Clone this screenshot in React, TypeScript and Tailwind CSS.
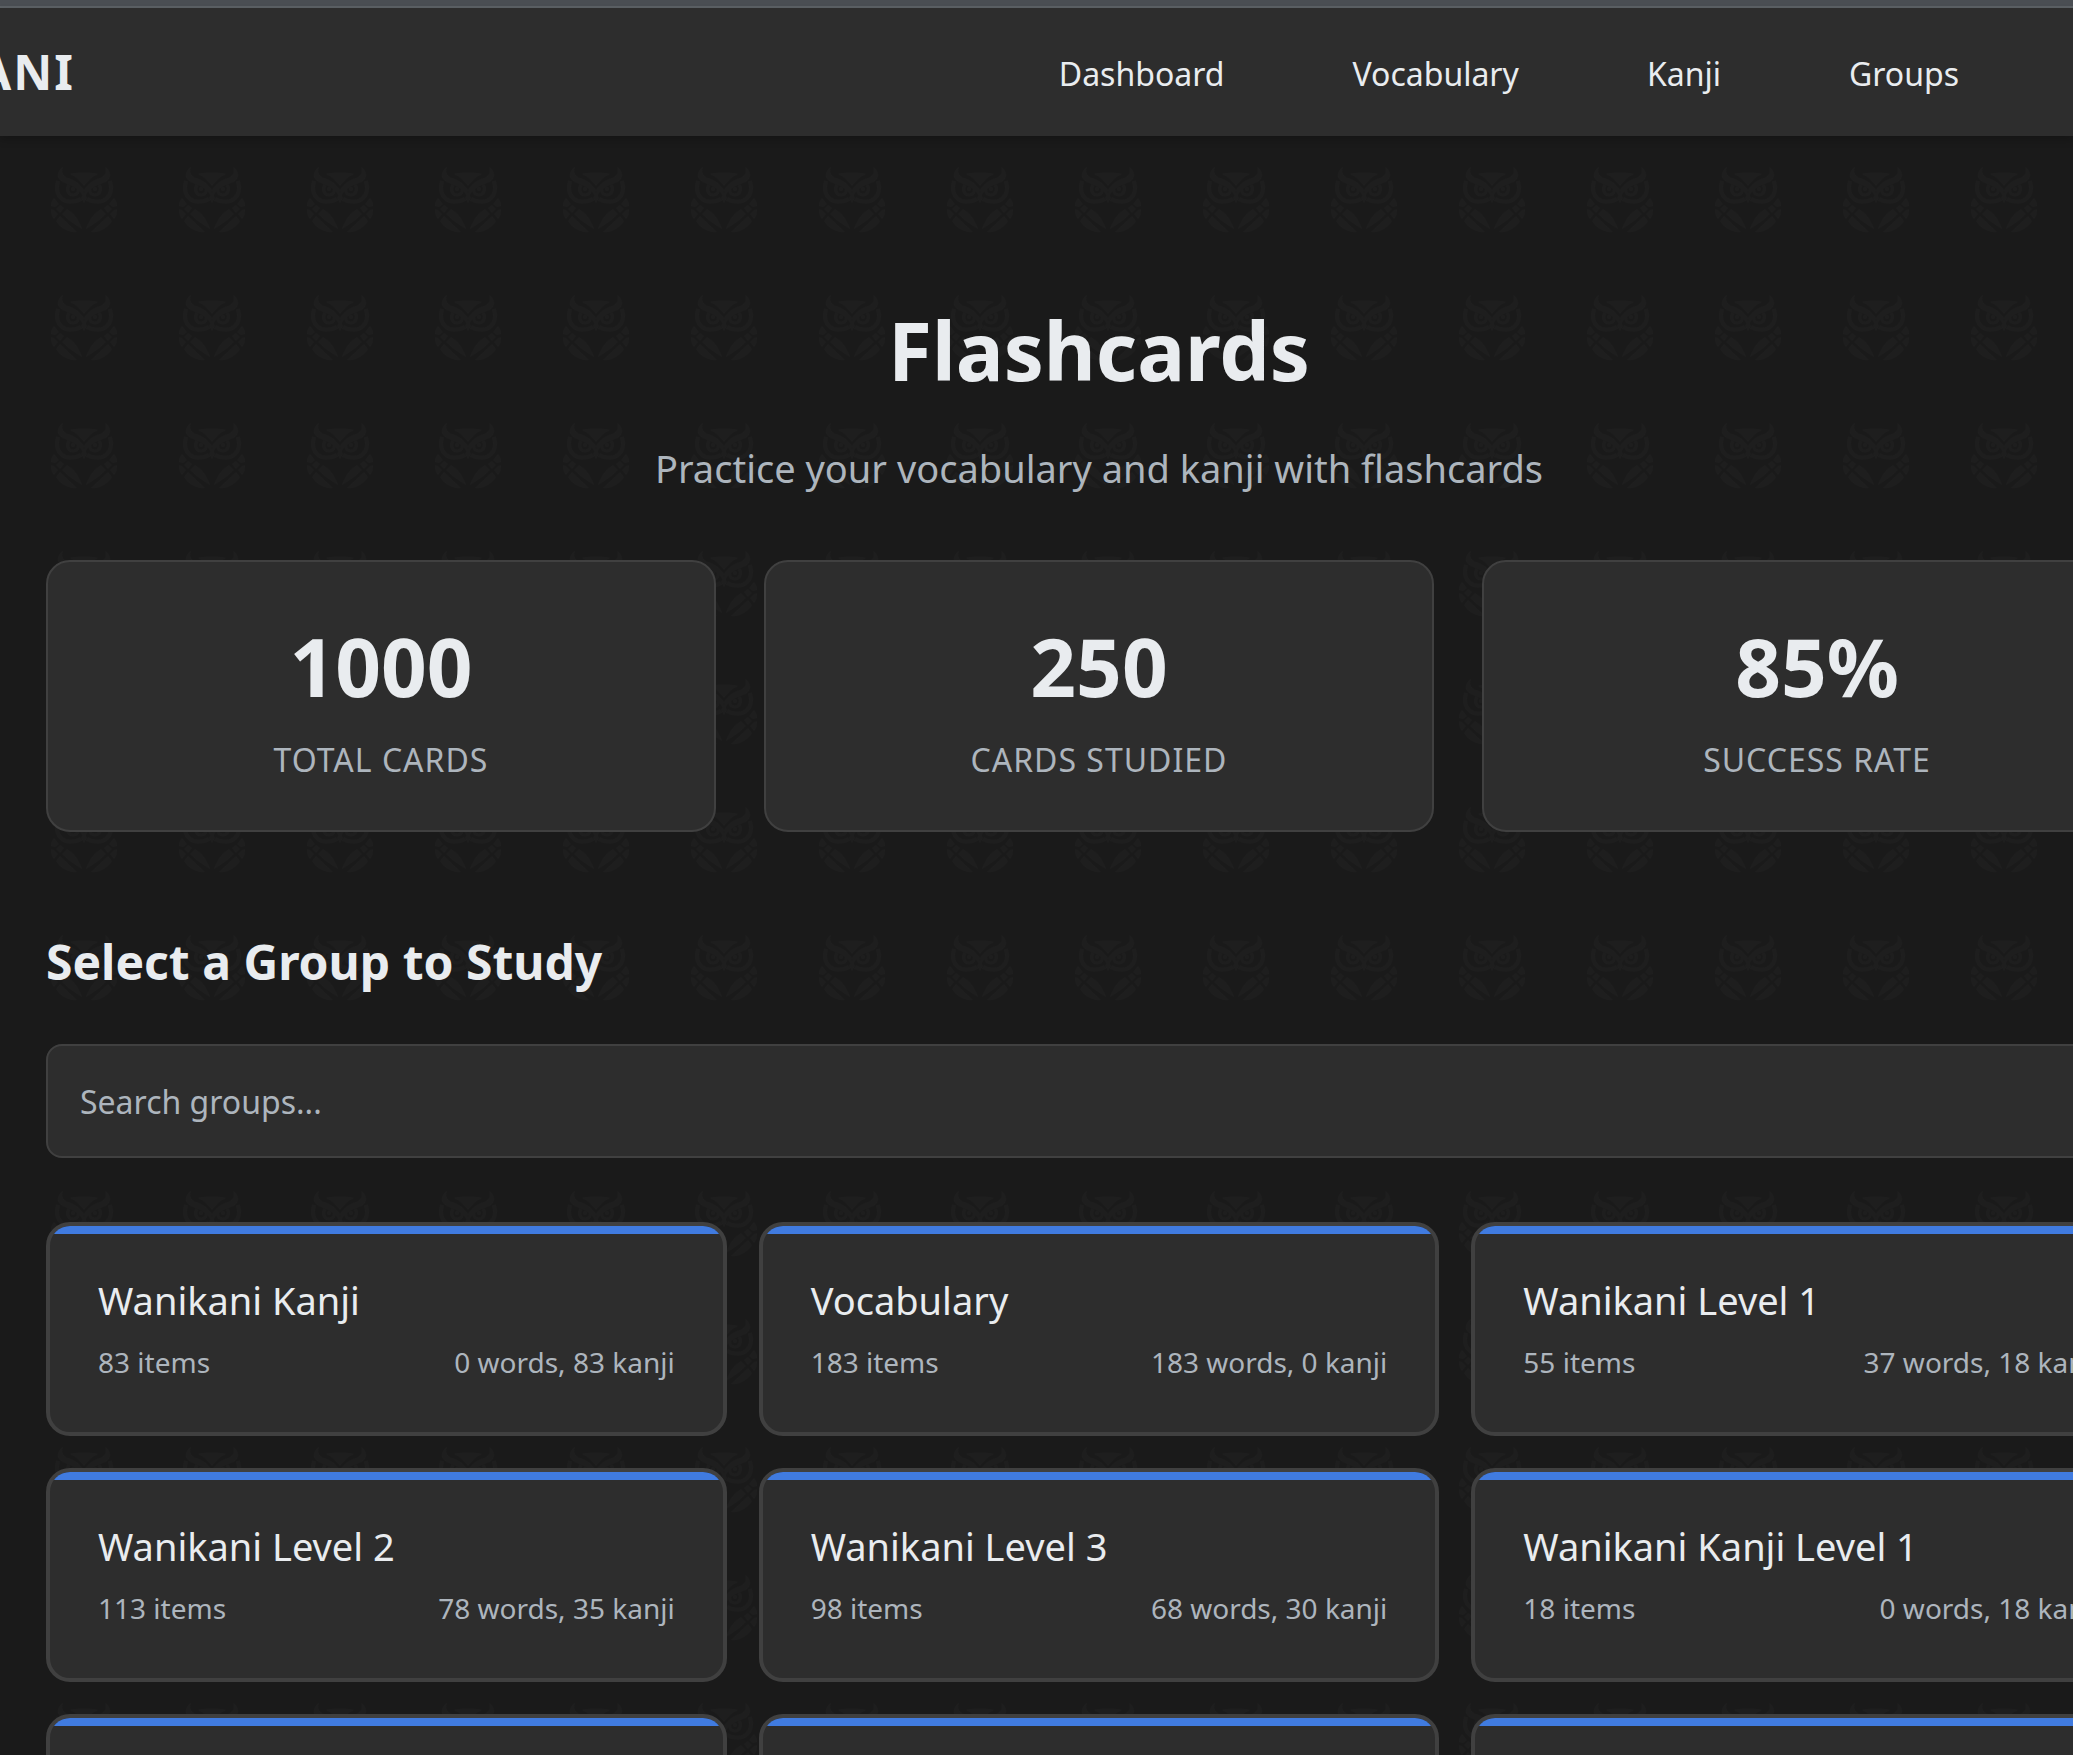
const navItems = ["Dashboard", "Vocabulary", "Kanji", "Groups"];

const stats = [
  { value: "1000", label: "Total Cards" },
  { value: "250", label: "Cards Studied" },
  { value: "85%", label: "Success Rate" },
];

const groups = [
  { name: "Wanikani Kanji", items: 83, words: 0, kanji: 83 },
  { name: "Vocabulary", items: 183, words: 183, kanji: 0 },
  { name: "Wanikani Level 1", items: 55, words: 37, kanji: 18 },
  { name: "Wanikani Level 2", items: 113, words: 78, kanji: 35 },
  { name: "Wanikani Level 3", items: 98, words: 68, kanji: 30 },
  { name: "Wanikani Kanji Level 1", items: 18, words: 0, kanji: 18 },
];

function OwlHalf() {
  return (
    <g>
      {/* ear and brow */}
      <path d="M13 0 C8 3 6 9 10 13 C13 16 19 17 24 20 C28 22 31 25 33 29 L34 23 C30 17 25 13 18 11 C13 9 11 5 13 0Z" />
      {/* face outline */}
      <path d="M8 14 C6 21 7 28 12 32 C17 36 26 35 31 32" fill="none" stroke="#1e1e1e" strokeWidth="4" />
      {/* eye */}
      <path d="M19 18 C16 22 18 28 23 28 C27 28 29 25 28 22" fill="none" stroke="#1e1e1e" strokeWidth="3" />
      <circle cx="23" cy="22" r="2" />
      {/* wing feathers */}
      <path d="M4 31 L9 37 L5 40 L1 39 C1 36 2 33 4 31Z" />
      <path d="M10 38 L14 41 L10 46 L6 42Z" />
      <path d="M1 42 L4 43 L8 47 L4 52 C1 49 1 45 1 42Z" />
      <path d="M17 42 C24 46 29 53 32 62 C25 58 18 53 12 47Z" />
      <path d="M10 49 C15 54 21 59 27 65 C19 66 10 61 6 54Z" />
    </g>
  );
}

function OwlPattern() {
  return (
    <svg aria-hidden="true" className="absolute inset-0 -z-10 h-full w-full">
      <defs>
        <pattern id="owls" x="20" y="0" width="128" height="128" patternUnits="userSpaceOnUse">
          <g fill="#1e1e1e" transform="translate(30 31)">
            <OwlHalf />
            <g transform="translate(68 0) scale(-1 1)">
              <OwlHalf />
            </g>
            <path d="M20 7 C26 5 42 5 48 7 C43 9 38 13 34 19 C30 13 25 9 20 7Z" />
            <path d="M34 25 L37 31 L34 36 L31 31Z" />
          </g>
        </pattern>
      </defs>
      <rect width="100%" height="100%" fill="url(#owls)" />
    </svg>
  );
}

export default function App() {
  return (
    <div className="flex h-screen flex-col overflow-hidden bg-[#1a1a1a] font-['Noto_Sans',sans-serif] text-[#e9ecef]">
      <div className="h-2 shrink-0 border-b-2 border-[#5c6165] bg-[#4a4e53]" />
      <header className="relative z-10 flex h-32 shrink-0 items-center justify-between bg-[#2d2d2d] pr-[114px] shadow-[0_4px_8px_rgba(0,0,0,0.2)]">
        <a href="#home" className="-ml-[22px] text-[48px] leading-[64px] font-bold tracking-[2px]">
          ANI
        </a>
        <nav className="flex gap-32 pt-1 text-[32px] leading-[48px]">
          {navItems.map((item) => (
            <a key={item} href={`#${item.toLowerCase()}`}>
              {item}
            </a>
          ))}
        </nav>
      </header>

      <main className="relative isolate -mr-[125px] grow px-[46px]">
        <OwlPattern />
        <div className="flex flex-col items-center pt-[158px] text-center">
          <h1 className="text-[80px] leading-[112px] font-bold">Flashcards</h1>
          <p className="mt-8 text-[38px] leading-[60px] text-[#adb5bd]">
            Practice your vocabulary and kanji with flashcards
          </p>
        </div>

        <section className="mt-[62px] grid grid-cols-3 gap-12">
          {stats.map((stat) => (
            <div
              key={stat.label}
              className="flex flex-col items-center rounded-3xl border-2 border-[#404040] bg-[#2d2d2d] pt-11 pb-[46px]"
            >
              <div className="text-[80px] leading-[120px] font-bold">{stat.value}</div>
              <div className="mt-[10px] text-[32px] leading-[48px] tracking-[1px] text-[#adb5bd] uppercase">
                {stat.label}
              </div>
            </div>
          ))}
        </section>

        <section className="pt-[94px]">
          <h2 className="text-[48px] leading-[72px] font-bold">Select a Group to Study</h2>
          <input
            type="search"
            aria-label="Search groups"
            placeholder="Search groups..."
            className="mt-[46px] block h-[114px] w-full rounded-2xl border-2 border-[#404040] bg-[#2d2d2d] px-8 text-[32px] placeholder:text-[#adb5bd]"
          />
          <div className="mt-16 grid grid-cols-3 gap-8">
            {groups.map((group) => (
              <button
                key={group.name}
                type="button"
                className="relative h-[214px] overflow-hidden rounded-3xl border-4 border-[#404040] bg-[#2d2d2d] px-12 pt-11 pb-12 text-left"
              >
                <span className="absolute inset-x-0 top-0 h-2 bg-[#407be0]" />
                <span className="block text-[38px] leading-[60px]">{group.name}</span>
                <span className="mt-2 flex justify-between text-[28px] leading-[48px] text-[#adb5bd]">
                  <span>{group.items} items</span>
                  <span>
                    {group.words} words, {group.kanji} kanji
                  </span>
                </span>
              </button>
            ))}
            {[0, 1, 2].map((index) => (
              <div
                key={index}
                className="relative h-[214px] overflow-hidden rounded-3xl border-4 border-[#404040] bg-[#2d2d2d]"
              >
                <span className="absolute inset-x-0 top-0 h-2 bg-[#407be0]" />
              </div>
            ))}
          </div>
        </section>
      </main>
    </div>
  );
}
